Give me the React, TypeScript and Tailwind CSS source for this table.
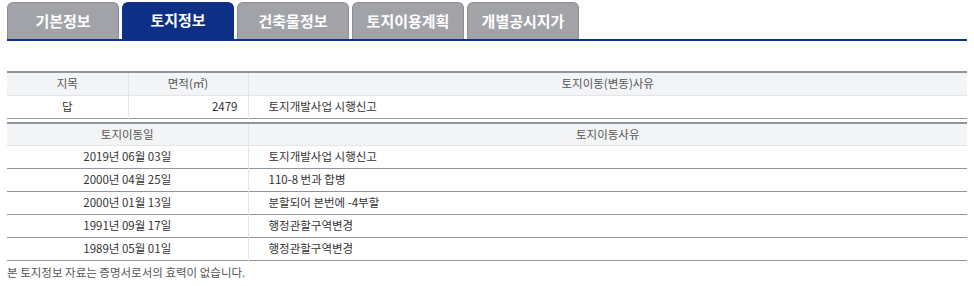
const TABS = ["기본정보", "토지정보", "건축물정보", "토지이용계획", "개별공시지가"];

const HISTORY = [
  { date: "2019년 06월 03일", reason: "토지개발사업 시행신고" },
  { date: "2000년 04월 25일", reason: "110-8 번과 합병" },
  { date: "2000년 01월 13일", reason: "분할되어 본번에 -4부할" },
  { date: "1991년 09월 17일", reason: "행정관할구역변경" },
  { date: "1989년 05월 01일", reason: "행정관할구역변경" },
];

const font = "font-['Malgun_Gothic','Noto_Sans_CJK_KR',sans-serif]";

export default function App() {
  return (
    <div className={`w-[974px] h-[286px] bg-white px-[7px] pt-[2px] ${font}`}>
      {/* tabs */}
      <div className="flex gap-[3px] border-b-2 border-[#0d2f86]">
        {TABS.map((t, i) => (
          <div
            key={t}
            className={
              i === 1
                ? "w-[112px] h-[37px] flex items-center justify-center rounded-t-[6px] bg-[#0d2f86] text-white text-[15px] font-bold"
                : "w-[112px] h-[37px] flex items-center justify-center rounded-t-[6px] bg-[#a1a3a8] border border-b-0 border-[#8c8e93] text-white text-[15px] font-bold"
            }
          >
            {t}
          </div>
        ))}
      </div>

      {/* 토지 기본 */}
      <table className="mt-[30px] w-full border-collapse text-[11.5px] text-[#333]">
        <thead>
          <tr className="h-[23px] bg-[#f3f4f6] border-t-2 border-[#8f959e] text-[#555]">
            <th className="w-[121px] font-normal border-r border-b border-[#e3e5e8]">지목</th>
            <th className="w-[120px] font-normal border-r border-b border-[#e3e5e8]">면적(㎡)</th>
            <th className="font-normal border-b border-[#e3e5e8]">토지이동(변동)사유</th>
          </tr>
        </thead>
        <tbody>
          <tr className="h-[23px] border-b border-[#8f959e]">
            <td className="text-center border-r border-[#e3e5e8]">답</td>
            <td className="text-right pr-[10px] border-r border-[#e3e5e8]">2479</td>
            <td className="pl-[20px]">토지개발사업 시행신고</td>
          </tr>
        </tbody>
      </table>

      {/* 토지 이동 이력 */}
      <table className="mt-[3px] w-full border-collapse text-[11.5px] text-[#333]">
        <thead>
          <tr className="h-[23px] bg-[#f3f4f6] border-t-2 border-[#8f959e] text-[#555]">
            <th className="w-[241px] font-normal border-r border-b border-[#e3e5e8]">토지이동일</th>
            <th className="font-normal border-b border-[#e3e5e8]">토지이동사유</th>
          </tr>
        </thead>
        <tbody>
          {HISTORY.map((h, i) => (
            <tr key={i} className="h-[23px] border-b border-[#8f959e]">
              <td className="text-center border-r border-[#e3e5e8]">{h.date}</td>
              <td className="pl-[20px]">{h.reason}</td>
            </tr>
          ))}
        </tbody>
      </table>

      <p className="mt-[2px] text-[11.5px] text-[#555] leading-[18px]">
        본 토지정보 자료는 증명서로서의 효력이 없습니다.
      </p>
    </div>
  );
}
